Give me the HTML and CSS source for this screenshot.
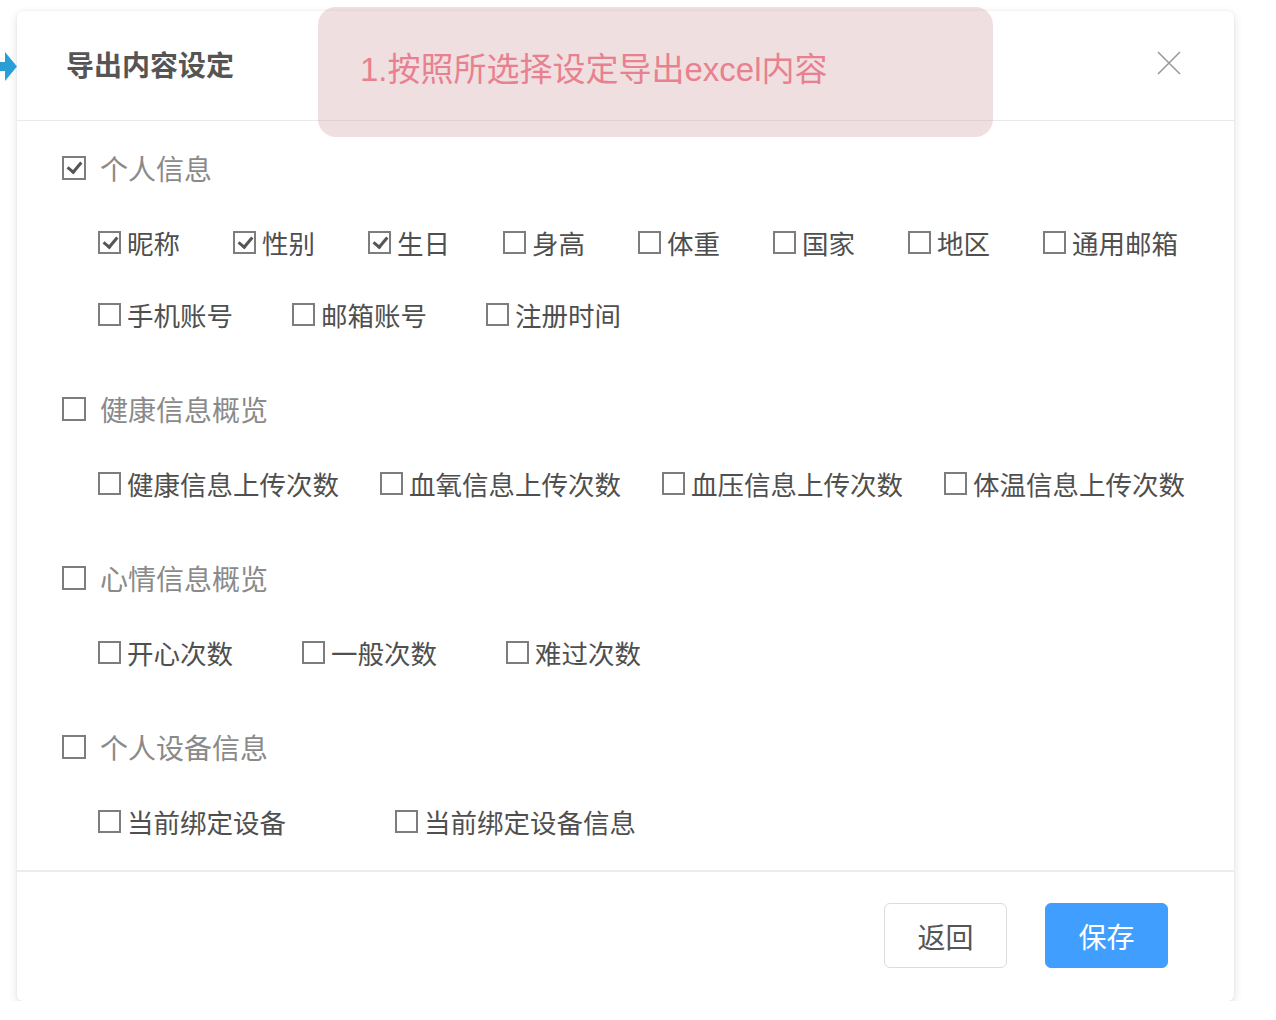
FILE: index.html
```html
<!DOCTYPE html>
<html lang="zh-CN">

<head>
    <meta charset="UTF-8">
    <meta name="viewport" content="width=device-width, initial-scale=1.0">
    <title>导出内容设定</title>
    <link rel="stylesheet" href="styles.css">
</head>

<body>
    <svg class="pointer" width="17" height="29" viewBox="0 0 17 29">
        <path d="M0 10 H5 V0 L17 14.5 L5 29 V19 H0 Z" fill="#2a9fd6" />
    </svg>

    <div class="dialog">
        <div class="dialog-header">
            <h1 class="dialog-title">导出内容设定</h1>
            <svg class="close" width="24" height="24" viewBox="0 0 24 24">
                <path d="M1 1 L23 23 M23 1 L1 23" stroke="#9a9a9a" stroke-width="1.6" fill="none" />
            </svg>
        </div>

        <div class="dialog-body">
            <div class="group">
                <label class="group-label"><span class="box checked"></span>个人信息</label>
                <div class="options">
                    <div class="row">
                        <label class="opt w135"><span class="box checked"></span>昵称</label>
                        <label class="opt w135"><span class="box checked"></span>性别</label>
                        <label class="opt w135"><span class="box checked"></span>生日</label>
                        <label class="opt w135"><span class="box"></span>身高</label>
                        <label class="opt w135"><span class="box"></span>体重</label>
                        <label class="opt w135"><span class="box"></span>国家</label>
                        <label class="opt w135"><span class="box"></span>地区</label>
                        <label class="opt"><span class="box"></span>通用邮箱</label>
                    </div>
                    <div class="row">
                        <label class="opt w194"><span class="box"></span>手机账号</label>
                        <label class="opt w194"><span class="box"></span>邮箱账号</label>
                        <label class="opt"><span class="box"></span>注册时间</label>
                    </div>
                </div>
            </div>

            <div class="group">
                <label class="group-label"><span class="box"></span>健康信息概览</label>
                <div class="options">
                    <div class="row">
                        <label class="opt w282"><span class="box"></span>健康信息上传次数</label>
                        <label class="opt w282"><span class="box"></span>血氧信息上传次数</label>
                        <label class="opt w282"><span class="box"></span>血压信息上传次数</label>
                        <label class="opt"><span class="box"></span>体温信息上传次数</label>
                    </div>
                </div>
            </div>

            <div class="group">
                <label class="group-label"><span class="box"></span>心情信息概览</label>
                <div class="options">
                    <div class="row">
                        <label class="opt w204"><span class="box"></span>开心次数</label>
                        <label class="opt w204"><span class="box"></span>一般次数</label>
                        <label class="opt"><span class="box"></span>难过次数</label>
                    </div>
                </div>
            </div>

            <div class="group">
                <label class="group-label"><span class="box"></span>个人设备信息</label>
                <div class="options">
                    <div class="row">
                        <label class="opt w297"><span class="box"></span>当前绑定设备</label>
                        <label class="opt"><span class="box"></span>当前绑定设备信息</label>
                    </div>
                </div>
            </div>
        </div>

        <div class="dialog-footer">
            <button class="btn">返回</button>
            <button class="btn btn-primary">保存</button>
        </div>
    </div>

    <div class="tip">1.按照所选择设定导出excel内容</div>
</body>

</html>
```

FILE: styles.css
```css
body {
    margin: 0;
    padding: 11px 0 0 17px;
    background-color: #ffffff;
    font-family: "Noto Sans CJK SC", "Noto Sans", sans-serif;
    color: #555;
}

.pointer {
    position: absolute;
    left: 0;
    top: 52px;
}

.dialog {
    width: 1217px;
    background-color: #fff;
    border-radius: 6px;
    box-shadow: 0 3px 10px rgba(0, 0, 0, 0.12), 0 0 2px rgba(0, 0, 0, 0.08);
}

.dialog-header {
    height: 109px;
    display: flex;
    align-items: center;
    justify-content: space-between;
    padding: 0 53px 0 49px;
    border-bottom: 1px solid #e9e9e9;
}

.dialog-title {
    margin: 0 0 4px;
    font-size: 28px;
    font-weight: bold;
    color: #555;
}

.close {
    margin-bottom: 6px;
}

.dialog-body {
    padding: 23px 0 13px 45px;
}

.group + .group {
    margin-top: 35px;
}

.group-label {
    display: flex;
    align-items: center;
    height: 48px;
    font-size: 28px;
    color: #8a8a8a;
}

.group-label .box {
    width: 24px;
    height: 24px;
    margin-right: 14px;
}

.options {
    margin-top: 14px;
    padding-left: 36px;
}

.row {
    display: flex;
    align-items: center;
    height: 72px;
}

.opt {
    display: flex;
    align-items: center;
    font-size: 26.5px;
    color: #4f4f4f;
    white-space: nowrap;
}

.w135 { width: 135px; }
.w194 { width: 194px; }
.w204 { width: 204px; }
.w282 { width: 282px; }
.w297 { width: 297px; }

.box {
    box-sizing: border-box;
    width: 23px;
    height: 23px;
    margin-right: 6px;
    border: 2px solid #7d7d7d;
    flex-shrink: 0;
    position: relative;
}

.box.checked::after {
    content: "";
    position: absolute;
    left: 6px;
    top: 1px;
    width: 6px;
    height: 11px;
    border: solid #555;
    border-width: 0 3px 3px 0;
    transform: rotate(40deg);
}

.dialog-footer {
    height: 131px;
    box-sizing: border-box;
    display: flex;
    align-items: flex-start;
    justify-content: flex-end;
    gap: 38px;
    padding: 31px 66px 0 0;
    border-top: 2px solid #ececec;
}

.btn {
    width: 123px;
    height: 65px;
    font-family: inherit;
    font-size: 28px;
    color: #555;
    background-color: #fff;
    border: 1.5px solid #dcdcdc;
    border-radius: 6px;
    cursor: pointer;
}

.btn-primary {
    background-color: #409eff;
    border-color: #409eff;
    color: #fff;
}

.tip {
    position: absolute;
    left: 318px;
    top: 7px;
    box-sizing: border-box;
    width: 675px;
    height: 130px;
    padding: 41px 0 0 42px;
    border-radius: 18px;
    background-color: rgba(212, 164, 166, 0.35);
    color: #e8818f;
    font-family: "Liberation Sans", "Noto Sans CJK SC", sans-serif;
    font-size: 33px;
    line-height: 44px;
}
```
